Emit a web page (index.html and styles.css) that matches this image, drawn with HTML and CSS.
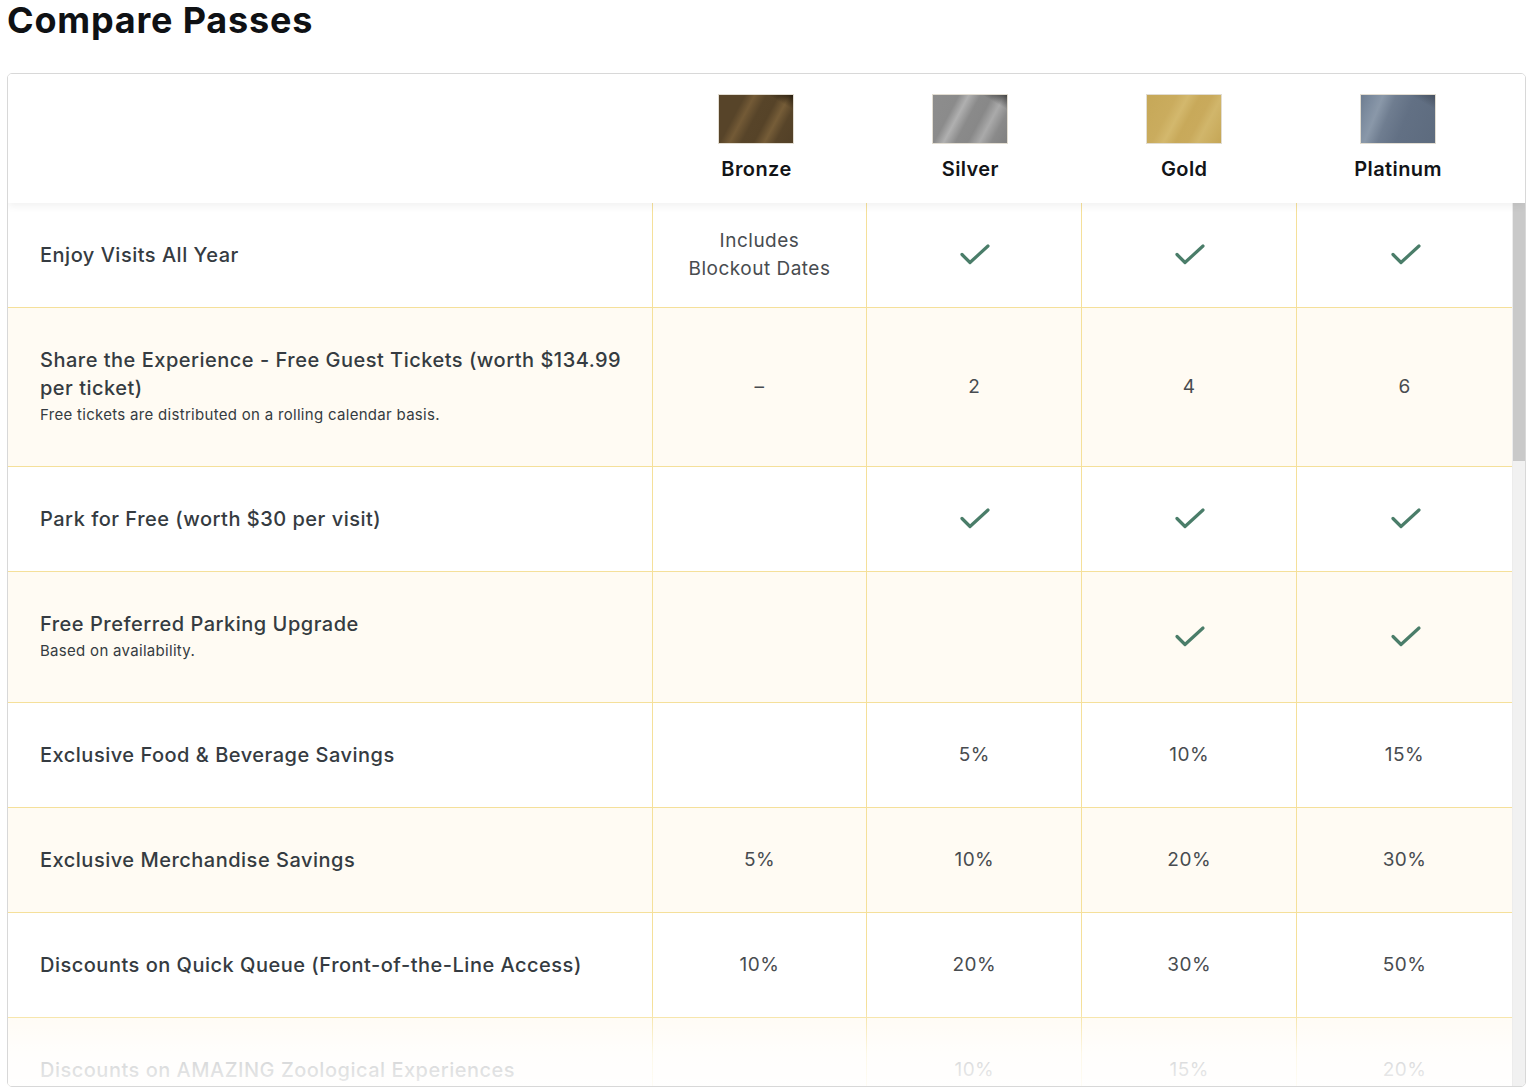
FILE: index.html
```html
<!DOCTYPE html>
<html lang="en">
<head>
<meta charset="utf-8">
<title>Compare Passes</title>
<link rel="stylesheet" href="styles.css">
</head>
<body>
<main class="page">
  <h1 class="title">Compare Passes</h1>
  <section class="card">
    <div class="head">
      <div class="head-spacer"></div>
      <div class="pass"><span class="swatch bronze"></span><span class="pass-name">Bronze</span></div>
      <div class="pass"><span class="swatch silver"></span><span class="pass-name">Silver</span></div>
      <div class="pass"><span class="swatch gold"></span><span class="pass-name">Gold</span></div>
      <div class="pass"><span class="swatch platinum"></span><span class="pass-name">Platinum</span></div>
    </div>
    <div class="body">
      <div class="rows">
        <div class="row">
          <div class="feature"><div class="label">Enjoy Visits All Year</div></div>
          <div class="val">Includes<br>Blockout Dates</div>
          <div class="val"><svg class="check" viewBox="0 0 32 24"><polyline points="3,11.5 11,19.5 29,3"/></svg></div>
          <div class="val"><svg class="check" viewBox="0 0 32 24"><polyline points="3,11.5 11,19.5 29,3"/></svg></div>
          <div class="val"><svg class="check" viewBox="0 0 32 24"><polyline points="3,11.5 11,19.5 29,3"/></svg></div>
        </div>
        <div class="row alt">
          <div class="feature"><div class="label">Share the Experience - Free Guest Tickets (worth $134.99 per ticket)</div><div class="sub">Free tickets are distributed on a rolling calendar basis.</div></div>
          <div class="val">–</div>
          <div class="val">2</div>
          <div class="val">4</div>
          <div class="val">6</div>
        </div>
        <div class="row">
          <div class="feature"><div class="label">Park for Free (worth $30 per visit)</div></div>
          <div class="val"></div>
          <div class="val"><svg class="check" viewBox="0 0 32 24"><polyline points="3,11.5 11,19.5 29,3"/></svg></div>
          <div class="val"><svg class="check" viewBox="0 0 32 24"><polyline points="3,11.5 11,19.5 29,3"/></svg></div>
          <div class="val"><svg class="check" viewBox="0 0 32 24"><polyline points="3,11.5 11,19.5 29,3"/></svg></div>
        </div>
        <div class="row alt">
          <div class="feature"><div class="label">Free Preferred Parking Upgrade</div><div class="sub">Based on availability.</div></div>
          <div class="val"></div>
          <div class="val"></div>
          <div class="val"><svg class="check" viewBox="0 0 32 24"><polyline points="3,11.5 11,19.5 29,3"/></svg></div>
          <div class="val"><svg class="check" viewBox="0 0 32 24"><polyline points="3,11.5 11,19.5 29,3"/></svg></div>
        </div>
        <div class="row">
          <div class="feature"><div class="label">Exclusive Food &amp; Beverage Savings</div></div>
          <div class="val"></div>
          <div class="val">5%</div>
          <div class="val">10%</div>
          <div class="val">15%</div>
        </div>
        <div class="row alt">
          <div class="feature"><div class="label">Exclusive Merchandise Savings</div></div>
          <div class="val">5%</div>
          <div class="val">10%</div>
          <div class="val">20%</div>
          <div class="val">30%</div>
        </div>
        <div class="row">
          <div class="feature"><div class="label">Discounts on Quick Queue (Front-of-the-Line Access)</div></div>
          <div class="val">10%</div>
          <div class="val">20%</div>
          <div class="val">30%</div>
          <div class="val">50%</div>
        </div>
        <div class="row alt">
          <div class="feature"><div class="label">Discounts on AMAZING Zoological Experiences</div></div>
          <div class="val"></div>
          <div class="val">10%</div>
          <div class="val">15%</div>
          <div class="val">20%</div>
        </div>
        <div class="fade"></div>
      </div>
      <div class="scrollbar"><div class="thumb"></div></div>
    </div>
  </section>
</main>
</body>
</html>
```
FILE: styles.css
```css
* { box-sizing: border-box; }
html, body { margin: 0; padding: 0; background: #fff; }
body { font-family: Inter, "Noto Sans", "DejaVu Sans", sans-serif; color: #222; }
.page { padding: 0 10px 0 7px; }
.title {
  margin: 0 0 33px 0;
  font-size: 36px;
  line-height: 40px;
  font-weight: 700;
  color: #0f1114;
  letter-spacing: 0.8px;
}
.card {
  border: 1px solid #d8d8d8;
  border-radius: 5px;
  overflow: hidden;
  height: 1014px;
  display: flex;
  flex-direction: column;
}
.head {
  position: relative;
  z-index: 2;
  height: 129px;
  flex: none;
  display: grid;
  grid-template-columns: 3fr 1fr 1fr 1fr 1fr;
  padding: 20px 20px 0 0;
  background: #fff;
  box-shadow: 0 3px 8px rgba(0,0,0,0.06);
}
.pass {
  display: flex;
  flex-direction: column;
  align-items: center;
  gap: 11px;
}
.swatch {
  width: 76px;
  height: 50px;
  display: block;
  border: 1px solid #e2ddd2;
}
.bronze {
  background:
    linear-gradient(210deg, rgba(25,18,8,0.85) 0%, rgba(25,18,8,0) 16%),
    linear-gradient(118deg, #574429 0%, #574429 26%, #735a36 36%, #574429 48%, #564328 60%, #765d38 71%, #574429 82%, #524027 100%);
}
.silver {
  background:
    linear-gradient(210deg, rgba(40,40,40,0.8) 0%, rgba(40,40,40,0) 16%),
    linear-gradient(118deg, #8d8d8d 0%, #8b8b8b 26%, #b0b0b0 36%, #8a8a8a 48%, #888888 60%, #aaaaaa 72%, #8a8a8a 84%, #808080 100%);
}
.gold {
  background:
    linear-gradient(118deg, #c6a858 0%, #caac5e 30%, #d3b86d 42%, #c8a95a 54%, #c9aa5c 66%, #d1b66b 76%, #c5a656 100%);
}
.platinum {
  background:
    linear-gradient(210deg, rgba(50,58,70,0.55) 0%, rgba(50,58,70,0) 16%),
    linear-gradient(112deg, #6e7d90 0%, #7e8da0 14%, #8a98a9 24%, #6f7d90 38%, #627084 58%, #5d6b7e 100%);
}
.pass-name {
  font-size: 20px;
  line-height: 28px;
  font-weight: 600;
  color: #121417;
  letter-spacing: 0.4px;
}
.body {
  flex: 1;
  min-height: 0;
  display: flex;
}
.rows {
  position: relative;
  flex: 1;
  overflow: hidden;
}
.row {
  display: grid;
  grid-template-columns: 3fr 1fr 1fr 1fr 1fr;
  border-bottom: 1px solid #f5e09a;
  background: #fff;
}
.row.alt { background: #fffbf3; }
.feature {
  padding: 38px 24px 38px 32px;
  border-right: 1px solid #f5e09a;
}
.label {
  font-size: 20px;
  line-height: 28px;
  font-weight: 500;
  color: #353b41;
  letter-spacing: 0.5px;
}
.sub {
  font-size: 15px;
  line-height: 26px;
  color: #353b41;
  letter-spacing: 0.3px;
}
.val {
  display: flex;
  align-items: center;
  justify-content: center;
  text-align: center;
  font-size: 19px;
  line-height: 28px;
  color: #484c50;
  letter-spacing: 0.5px;
  border-right: 1px solid #f5e09a;
}
.val:last-child { border-right: none; }
.check {
  width: 32px;
  height: 24px;
  margin-left: 2px;
  fill: none;
  stroke: #4a7d69;
  stroke-width: 3.2;
  stroke-linecap: round;
  stroke-linejoin: round;
}
.fade {
  position: absolute;
  left: 0;
  right: 0;
  bottom: 0;
  height: 80px;
  background: linear-gradient(to bottom, rgba(255,255,255,0) 0%, rgba(255,255,255,0.78) 60%, rgba(255,255,255,0.9) 100%);
}
.scrollbar {
  width: 13px;
  flex: none;
  background: #f1f1f1;
  border-left: 1px solid #ececec;
}
.thumb {
  height: 258px;
  background: #c9c9c9;
}
```
